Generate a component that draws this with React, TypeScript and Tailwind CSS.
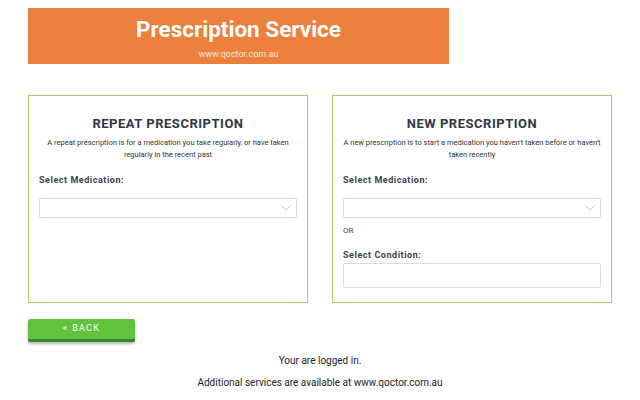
import React from "react";

const ChevronDown: React.FC = () => (
  <svg width="12" height="8" viewBox="0 0 12 8" className="shrink-0">
    <path d="M1 1.5 L6 6 L11 1.5" fill="none" stroke="#c4c4c4" strokeWidth="1" />
  </svg>
);

const SelectBox: React.FC = () => (
  <div className="flex h-[20px] items-center justify-end rounded-[2px] border border-[#dcdcdc] bg-white pr-[4px]">
    <ChevronDown />
  </div>
);

const Label: React.FC<{ children: React.ReactNode }> = ({ children }) => (
  <p className="text-[9px] font-bold tracking-[0.06em] text-[#3a4150]">{children}</p>
);

const App: React.FC = () => {
  return (
    <div className="h-[400px] w-[640px] bg-white px-[28px] pt-[8px] font-['Roboto',sans-serif] text-[#333]">
      <header className="flex h-[56px] w-[421px] flex-col items-center bg-[#ec803d] pt-[7px] text-white">
        <h1 className="text-[22.5px] font-bold leading-[28px]">Prescription Service</h1>
        <p className="mt-[6px] text-[9px] leading-[10px] text-[#fde8d8]">www.qoctor.com.au</p>
      </header>

      <div className="mt-[31px] flex gap-[24px]">
        <section className="h-[208px] w-[280px] border border-[#9ccc6b] px-[10px] pt-[20px]">
          <h2 className="text-center text-[13px] font-bold leading-[16px] tracking-[0.04em] text-[#2f3747]">
            REPEAT PRESCRIPTION
          </h2>
          <p className="mt-[5px] px-[2px] text-center text-[7.5px] leading-[12px] text-[#333]">
            A repeat prescription is for a medication you take regularly, or have taken
            regularly in the recent past
          </p>
          <div className="mt-[13px]">
            <Label>Select Medication:</Label>
          </div>
          <div className="mt-[10px]">
            <SelectBox />
          </div>
        </section>

        <section className="h-[208px] w-[280px] border border-[#9ccc6b] px-[10px] pt-[20px]">
          <h2 className="text-center text-[13px] font-bold leading-[16px] tracking-[0.04em] text-[#2f3747]">
            NEW PRESCRIPTION
          </h2>
          <p className="mt-[5px] text-center text-[7.5px] leading-[12px] text-[#333]">
            A new prescription is to start a medication you haven't taken before or haven't
            taken recently
          </p>
          <div className="mt-[13px]">
            <Label>Select Medication:</Label>
          </div>
          <div className="mt-[10px]">
            <SelectBox />
          </div>
          <p className="mt-[8px] text-[8px] leading-[10px] text-[#444]">OR</p>
          <div className="mt-[13px]">
            <Label>Select Condition:</Label>
          </div>
          <div className="mt-[1px] h-[25px] rounded-[2px] border border-[#dcdcdc] bg-white" />
        </section>
      </div>

      <button className="mt-[16px] flex h-[23px] w-[107px] items-center justify-center rounded-[2px] border-b-[3px] border-[#2e8a2c] bg-[#62c23e] text-[9px] font-normal tracking-[0.14em] text-white shadow-[0_2px_3px_rgba(0,0,0,0.3)]">
        &lt; BACK
      </button>

      <div className="mt-[12px] flex flex-col items-center text-[10px] leading-[13px] text-[#222]">
        <p>Your are logged in.</p>
        <p className="mt-[9px]">Additional services are available at www.qoctor.com.au</p>
      </div>
    </div>
  );
};

export default App;
